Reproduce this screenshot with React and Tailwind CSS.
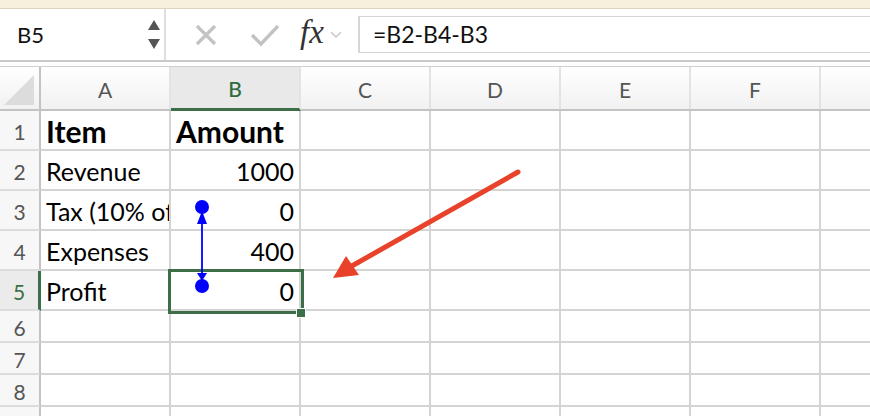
import React from 'react';

const COLS = ['A', 'B', 'C', 'D', 'E', 'F', 'G'];

const rows = [
  { n: 1, a: 'Item', b: 'Amount', bold: true },
  { n: 2, a: 'Revenue', b: '1000' },
  { n: 3, a: 'Tax (10% of', b: '0' },
  { n: 4, a: 'Expenses', b: '400' },
  { n: 5, a: 'Profit', b: '0' },
  { n: 6 },
  { n: 7 },
  { n: 8 },
  { n: 9 },
];

const font = { fontFamily: 'Lato, "Liberation Sans", sans-serif' };

const Stepper = () => (
  <svg width="14" height="32" viewBox="0 0 14 32" className="text-[#555]">
    <path d="M7 1 L13 11 L1 11 Z" fill="currentColor" />
    <path d="M1 20 L13 20 L7 30 Z" fill="currentColor" />
  </svg>
);

const FormulaBar = () => (
  <div className="flex h-[53px] bg-white border-b-2 border-[#c9c9c9]">
    {/* Name box */}
    <div className="w-[166px] flex items-center justify-between pl-[17px] pr-[3px] border-r-2 border-[#dedede]">
      <span className="text-[22px] text-[#111]">B5</span>
      <Stepper />
    </div>
    {/* Buttons */}
    <div className="flex items-center w-[192px] pl-[28px]">
      <svg width="24" height="24" viewBox="0 0 24 24" className="text-[#c3c3c3]">
        <path d="M3 3 L21 21 M21 3 L3 21" stroke="currentColor" strokeWidth="3.2" fill="none" />
      </svg>
      <svg width="30" height="24" viewBox="0 0 30 24" className="ml-[32px] text-[#c3c3c3]">
        <path d="M2 12 L11 21 L28 3" stroke="currentColor" strokeWidth="3.4" fill="none" />
      </svg>
      <span
        className="ml-[20px] text-[33px] italic text-[#333] leading-none -mt-[4px]"
        style={{ fontFamily: '"Liberation Serif", "DejaVu Serif", serif' }}
      >
        fx
      </span>
      <svg width="12" height="8" viewBox="0 0 12 8" className="ml-[6px] text-[#c9c9c9]">
        <path d="M1 1 L6 6 L11 1" stroke="currentColor" strokeWidth="1.5" fill="none" />
      </svg>
    </div>
    {/* Input */}
    <div className="flex-1 flex items-center py-[7px]">
      <div className="h-full w-full flex items-center pl-[13px] border-l-2 border-t border-b border-[#d6d6d6]">
        <span className="text-[23px] text-[#111]">=B2-B4-B3</span>
      </div>
    </div>
  </div>
);

const HeaderRow = () => (
  <div className="flex h-[44px] border-b-2 border-[#c3c3c3] bg-gradient-to-b from-white to-[#f1f1f1]">
    <div className="w-[41px] shrink-0 relative border-r-2 border-[#c3c3c3]">
      <svg width="32" height="32" viewBox="0 0 32 32" className="absolute right-[4px] bottom-[3px]">
        <path d="M31 1 L31 31 L1 31 Z" fill="#dcdcdc" />
      </svg>
    </div>
    {COLS.map((c) => (
      <div
        key={c}
        className={
          'w-[130px] shrink-0 flex items-center justify-center pt-[3px] text-[21px] border-r-2 border-[#e3e3e3] ' +
          (c === 'B' ? 'bg-[#e9e9e9] text-[#2f6b3f] font-medium border-b-[3px] border-b-[#3c6e47] -mb-[2px]' : 'text-[#555]')
        }
      >
        {c === 'G' ? '' : c}
      </div>
    ))}
  </div>
);

const Row = ({ r }) => {
  const tall = r.n <= 5;
  const active = r.n === 5;
  return (
    <div className={'flex ' + (tall ? 'h-[40px]' : 'h-[32px]')}>
      <div
        className={
          'w-[41px] shrink-0 flex items-center justify-center pt-[4px] text-[21px] border-b-2 border-[#dcdcdc] ' +
          (active
            ? 'bg-[#ebebeb] text-[#3c6e47] border-r-[3px] border-r-[#3c6e47]'
            : 'bg-[#f7f7f7] text-[#555] border-r-2 border-r-[#c3c3c3]')
        }
      >
        {r.n < 9 ? r.n : ''}
      </div>
      {COLS.map((c) => (
        <div
          key={c}
          className={
            'w-[130px] shrink-0 flex items-center border-r-2 border-b-2 border-[#d4d4d4] overflow-hidden whitespace-nowrap text-black ' +
            (r.bold ? 'text-[30px] font-bold pt-[2px]' : 'text-[25px] pt-[4px]')
          }
        >
          {c === 'A' && r.a && <span className="pl-[5px]">{r.a}</span>}
          {c === 'B' && r.b && (
            <span className={'w-full pr-[5px] ' + (r.bold ? 'pl-[5px] text-left' : 'text-right')}>{r.b}</span>
          )}
        </div>
      ))}
    </div>
  );
};

const Overlay = () => (
  <svg className="absolute left-0 top-0 pointer-events-none" width="870" height="416" viewBox="0 0 870 416">
    {/* precedent tracer */}
    <circle cx="202" cy="207" r="7" fill="#0000ff" />
    <path d="M202 211 L207 224 L197 224 Z" fill="#0000ff" />
    <line x1="202" y1="222" x2="202" y2="276" stroke="#0000ff" strokeWidth="1.8" />
    <path d="M197 273 L207 273 L202 281 Z" fill="#0000ff" />
    <circle cx="202" cy="286" r="7" fill="#0000ff" />
    {/* red annotation arrow */}
    <line x1="518" y1="172" x2="350" y2="267" stroke="#e8432a" strokeWidth="5" strokeLinecap="round" />
    <path d="M333 278 L346 256 L359 275 Z" fill="#e8432a" />
  </svg>
);

export default function App() {
  return (
    <div className="relative w-[870px] h-[416px] overflow-hidden bg-white" style={font}>
      <div className="h-[9px] bg-[#f7f0dc] border-b border-[#ddd5bf]" />
      <FormulaBar />
      <div className="h-[5px] bg-white border-b border-[#cfcfcf]" />
      <HeaderRow />
      {rows.map((r) => (
        <Row key={r.n} r={r} />
      ))}
      {/* selected cell B5 */}
      <div className="absolute left-[168px] top-[269px] w-[136px] h-[45px] border-[3px] border-[#3c6e47] pointer-events-none" />
      <div className="absolute left-[296px] top-[308px] w-[10px] h-[10px] bg-[#3c6e47] border border-white" />
      <Overlay />
    </div>
  );
}
